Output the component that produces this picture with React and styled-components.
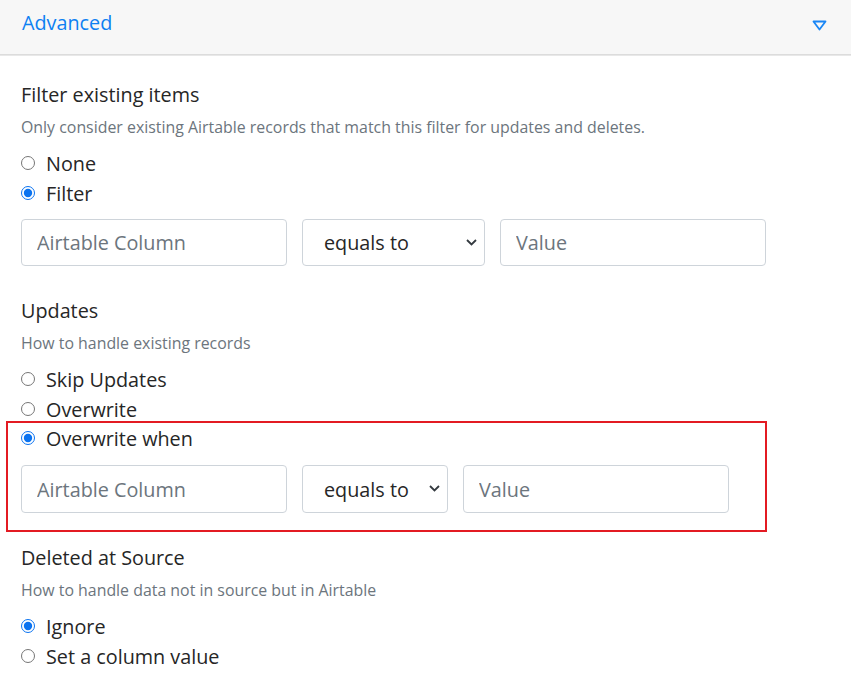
import React from "react";
import styled, { createGlobalStyle } from "styled-components";

const GlobalStyle = createGlobalStyle`
  body {
    margin: 0;
    background: #fff;
    font-family: "Open Sans", "Noto Sans", sans-serif;
    color: #212529;
  }
`;

const Header = styled.div`
  display: flex;
  align-items: center;
  justify-content: space-between;
  height: 54px;
  padding: 0 24px 0 22px;
  background: #f7f7f7;
  border-bottom: 1px solid #dcdcdc;
  box-shadow: 0 1px 0 #e8e8e8;
`;

const HeaderTitle = styled.span`
  color: #0d80f2;
  font-size: 19.8px;
  margin-top: -10px;
`;

const Caret = styled.svg`
  width: 15px;
  height: 11px;
  margin-top: -4px;
`;

const Body = styled.div`
  padding: 28px 21px 0;
`;

const Section = styled.section`
  margin-top: ${(p) => p.$gap || 0}px;
`;

const Title = styled.div`
  font-size: 19.8px;
  line-height: 24px;
  color: #262626;
`;

const Hint = styled.div`
  margin-top: 10px;
  font-size: 15.9px;
  line-height: 20px;
  color: #6c757d;
`;

const Radios = styled.div`
  display: flex;
  flex-direction: column;
  margin-top: 11px;
`;

const RadioRow = styled.label`
  display: flex;
  align-items: center;
  height: 30px;
  font-size: 19.8px;
  color: #262626;

  input {
    width: 14px;
    height: 14px;
    margin: 0 11px 0 0;
    accent-color: #0b73f0;
  }
`;

const Fields = styled.div`
  display: flex;
  gap: 15px;
  margin-top: 11px;
`;

const TextField = styled.input`
  box-sizing: border-box;
  width: 266px;
  height: 47px;
  padding: 0 15px;
  border: 1px solid #ced4da;
  border-radius: 4px;
  font-family: inherit;
  font-size: 19.8px;
  color: #495057;
  outline: none;

  &::placeholder {
    color: #6c757d;
  }
`;

const SelectWrap = styled.div`
  position: relative;
  width: ${(p) => p.$width}px;
  height: 47px;
`;

const Select = styled.select`
  box-sizing: border-box;
  appearance: none;
  width: 100%;
  height: 100%;
  padding: 0 30px 0 21px;
  border: 1px solid #ced4da;
  border-radius: 4px;
  background: #fff;
  font-family: inherit;
  font-size: 19.8px;
  color: #262626;
  outline: none;
`;

const Chevron = styled.svg`
  position: absolute;
  right: 8px;
  top: 20px;
  width: 11px;
  height: 7px;
  pointer-events: none;
`;

const Highlight = styled.div`
  box-sizing: border-box;
  width: 761px;
  margin: -3px 0 0 -15px;
  padding: 0 0 17px 13px;
  border: 2px solid #e31b23;

  ${Fields} {
    margin-top: 12px;
  }
  ${TextField}, ${SelectWrap} {
    height: 48px;
  }
`;

const Radio = ({ name, label, checked }) => (
  <RadioRow>
    <input type="radio" name={name} defaultChecked={checked} />
    {label}
  </RadioRow>
);

const FilterFields = ({ selectWidth }) => (
  <Fields>
    <TextField placeholder="Airtable Column" />
    <SelectWrap $width={selectWidth}>
      <Select defaultValue="eq">
        <option value="eq">equals to</option>
        <option value="ne">not equals to</option>
      </Select>
      <Chevron viewBox="0 0 11 7">
        <path d="M1 1l4.5 4.5L10 1" fill="none" stroke="#343a40" strokeWidth="1.8" />
      </Chevron>
    </SelectWrap>
    <TextField placeholder="Value" />
  </Fields>
);

export default function App() {
  return (
    <>
      <GlobalStyle />
      <Header>
        <HeaderTitle>Advanced</HeaderTitle>
        <Caret viewBox="0 0 15 11">
          <path d="M1.5 1.5h12L7.5 9.5z" fill="none" stroke="#1a86f5" strokeWidth="1.8" strokeLinejoin="round" />
        </Caret>
      </Header>
      <Body>
        <Section>
          <Title>Filter existing items</Title>
          <Hint>Only consider existing Airtable records that match this filter for updates and deletes.</Hint>
          <Radios>
            <Radio name="filter" label="None" />
            <Radio name="filter" label="Filter" checked />
          </Radios>
          <FilterFields selectWidth={183} />
        </Section>
        <Section $gap={33}>
          <Title>Updates</Title>
          <Hint>How to handle existing records</Hint>
          <Radios>
            <Radio name="updates" label="Skip Updates" />
            <Radio name="updates" label="Overwrite" />
          </Radios>
          <Highlight>
            <Radio name="updates" label="Overwrite when" checked />
            <FilterFields selectWidth={146} />
          </Highlight>
        </Section>
        <Section $gap={14}>
          <Title>Deleted at Source</Title>
          <Hint>How to handle data not in source but in Airtable</Hint>
          <Radios>
            <Radio name="deleted" label="Ignore" checked />
            <Radio name="deleted" label="Set a column value" />
          </Radios>
        </Section>
      </Body>
    </>
  );
}
